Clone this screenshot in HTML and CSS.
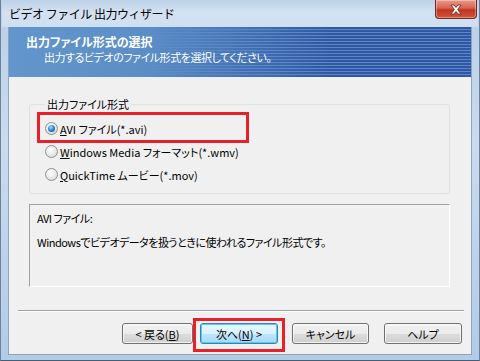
FILE: index.html
```html
<!DOCTYPE html>
<html lang="ja">
<head>
    <meta charset="UTF-8">
    <title>ビデオ ファイル 出力ウィザード</title>
    <link rel="stylesheet" href="styles.css">
</head>
<body>
    <div class="window">
        <div class="titlebar">
            <span class="title">ビデオ ファイル 出力ウィザード</span>
            <span class="close-btn">
                <svg width="14" height="11" viewBox="0 0 14 11">
                    <path d="M2 1 L5 1 L7 3.5 L9 1 L12 1 L8.6 5.5 L12 10 L9 10 L7 7.5 L5 10 L2 10 L5.4 5.5 Z" fill="#fff" stroke="#5b2a22" stroke-width="0.8"/>
                </svg>
            </span>
        </div>

        <div class="client">
            <div class="header">
                <div class="header-title">出力ファイル形式の選択</div>
                <div class="header-sub">出力するビデオのファイル形式を選択してください。</div>
            </div>

            <div class="content">
                <fieldset class="group">
                    <legend>出力ファイル形式</legend>
                    <div class="radio-row checked">
                        <span class="radio"></span>
                        <span class="radio-label"><u>A</u>VI ファイル(*.avi)</span>
                    </div>
                    <div class="radio-row">
                        <span class="radio"></span>
                        <span class="radio-label"><u>W</u>indows Media フォーマット(*.wmv)</span>
                    </div>
                    <div class="radio-row">
                        <span class="radio"></span>
                        <span class="radio-label"><u>Q</u>uickTime ムービー(*.mov)</span>
                    </div>
                </fieldset>

                <div class="desc-panel">
                    <p>AVI ファイル:</p>
                    <p>Windowsでビデオデータを扱うときに使われるファイル形式です。</p>
                </div>
            </div>

            <div class="separator"></div>

            <div class="buttons">
                <button class="btn btn-back">&lt; 戻る(<u>B</u>)</button>
                <button class="btn btn-next default">次へ(<u>N</u>) &gt;</button>
                <button class="btn btn-cancel">キャンセル</button>
                <button class="btn btn-help">ヘルプ</button>
            </div>
        </div>

        <!-- annotation marks -->
        <div class="mark mark-avi"></div>
        <div class="mark mark-next"></div>
    </div>
</body>
</html>
```

FILE: styles.css
```css
* {
    box-sizing: border-box;
    margin: 0;
    padding: 0;
}

body {
    width: 480px;
    height: 361px;
    overflow: hidden;
    font-family: "Noto Sans CJK JP", "Noto Sans", sans-serif;
    font-size: 12px;
    color: #000;
    background: #9fb8d2;
}

.window {
    position: relative;
    width: 480px;
    height: 361px;
    padding: 0 7px 5px 7px;
    background: linear-gradient(to bottom, #b9cfe7 0%, #c9dbef 40%, #b3cbe6 100%);
    border-left: 1px solid #6f8299;
    border-right: 1px solid #6f8299;
    border-bottom: 1px solid #4d5d70;
    display: flex;
    flex-direction: column;
}

/* title bar */
.titlebar {
    height: 27px;
    margin: 0 -6px;
    padding-left: 7px;
    display: flex;
    align-items: flex-start;
    background: linear-gradient(to bottom, #bcd1e8 0%, #d3e2f2 45%, #cfdff1 100%);
}

.title {
    line-height: 28px;
    font-size: 12px;
    letter-spacing: -0.5px;
}

.close-btn {
    margin-left: auto;
    margin-right: 1px;
    width: 42px;
    height: 19px;
    display: flex;
    align-items: center;
    justify-content: center;
    border: 1px solid #6b2a22;
    border-top: none;
    border-radius: 0 0 4px 4px;
    background: linear-gradient(to bottom, #e99a8a 0%, #d9634f 45%, #c2321f 55%, #d0553e 100%);
    box-shadow: inset 0 0 0 1px rgba(255,255,255,0.35);
}

/* client area */
.client {
    flex: 1;
    background: #f0f0f0;
    display: flex;
    flex-direction: column;
    border: 1px solid #8ca4be;
    border-top: none;
}

.header {
    height: 50px;
    color: #fff;
    padding: 7px 0 0 17px;
    font-feature-settings: "palt";
    background:
        linear-gradient(to right, #6396cc 0%, #5b8dc7 30%, rgba(70,115,185,0) 70%),
        repeating-linear-gradient(to bottom, #2f58a4 0px, #2f58a4 2px, #5f85c4 2px, #5f85c4 3px);
}

.header-title {
    font-weight: bold;
    line-height: 16px;
}

.header-sub {
    padding-left: 18px;
    line-height: 15px;
    font-size: 11px;
    letter-spacing: -0.45px;
}

.content {
    padding: 19px 21px 0 20px;
    font-size: 11px;
    font-feature-settings: "palt";
}

.group {
    height: 98px;
    border: 1px solid #dde1e5;
    border-radius: 3px;
    padding: 5px 0 0 15px;
}

.group legend {
    margin-left: 0;
    padding: 0 2px;
    line-height: 16px;
}

.radio-row {
    height: 23px;
    display: flex;
    align-items: center;
    gap: 2px;
}

.radio {
    width: 13px;
    height: 13px;
    border-radius: 50%;
    border: 1px solid #8f8f8f;
    background: radial-gradient(circle at 40% 35%, #ffffff 0%, #eaeaea 50%, #cfcfcf 100%);
    display: flex;
    align-items: center;
    justify-content: center;
}

.radio-row.checked .radio::after {
    content: "";
    width: 7px;
    height: 7px;
    border-radius: 50%;
    background: radial-gradient(circle at 40% 35%, #b9e4ff 0%, #2f8ad8 45%, #0b4f93 100%);
}

.radio-label {
    line-height: 16px;
}

.desc-panel {
    height: 83px;
    margin-top: 10px;
    padding: 5px 7px 0 7px;
    letter-spacing: -0.5px;
    border-top: 1px solid #a0a0a0;
    border-left: 1px solid #a0a0a0;
    border-right: 1px solid #ffffff;
    border-bottom: 1px solid #ffffff;
}

.desc-panel p {
    line-height: 16px;
    margin-bottom: 8px;
}

.separator {
    margin: 23px 7px 0 9px;
    height: 2px;
    border-top: 1px solid #a0a0a0;
    border-bottom: 1px solid #ffffff;
}

.buttons {
    margin-top: 11px;
    display: flex;
    padding-left: 113px;
}

.btn {
    height: 21px;
    font-family: inherit;
    font-size: 11px;
    font-feature-settings: "palt";
    color: #000;
    border: 1px solid #707070;
    border-radius: 3px;
    background: linear-gradient(to bottom, #f2f2f2 0%, #ebebeb 50%, #dddddd 51%, #cfcfcf 100%);
    box-shadow: inset 0 0 0 1px rgba(255,255,255,0.7);
}

.btn-back {
    width: 71px;
}

.btn-next {
    width: 78px;
    margin-left: 7px;
}

.btn-cancel {
    width: 77px;
    margin-left: 14px;
}

.btn-help {
    width: 78px;
    margin-left: 15px;
}

.btn.default {
    border-color: #3c7fb1;
    background: linear-gradient(to bottom, #eaf6fd 0%, #d9f0fc 50%, #bee6fd 51%, #a7d9f5 100%);
    box-shadow: inset 0 0 0 1px #48d2f6;
}

/* red annotation boxes */
.mark {
    position: absolute;
    border: 3px solid #e8202a;
}

.mark-avi {
    left: 36px;
    top: 112px;
    width: 212px;
    height: 31px;
}

.mark-next {
    left: 192px;
    top: 318px;
    width: 92px;
    height: 34px;
}
```
